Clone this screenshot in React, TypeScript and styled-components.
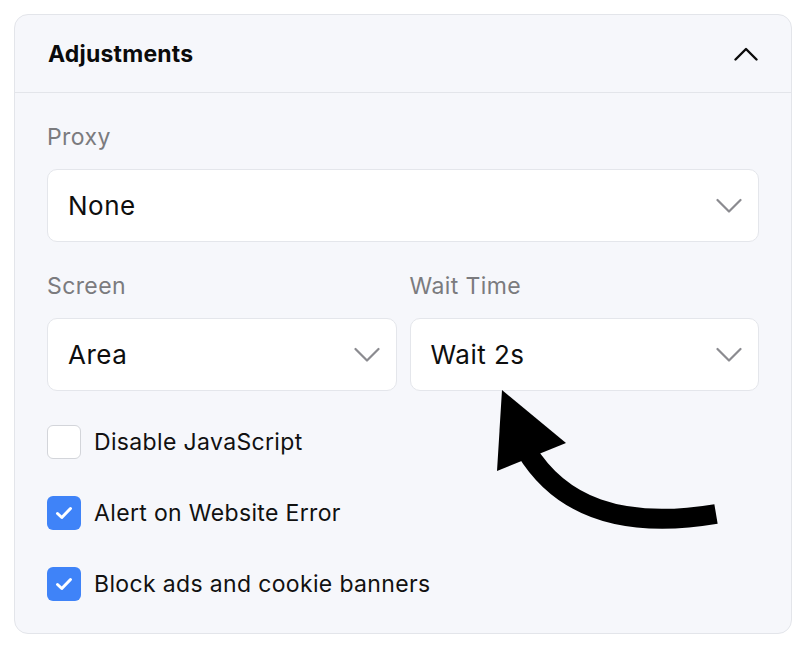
import React from "react";
import styled, { createGlobalStyle } from "styled-components";

const Global = createGlobalStyle`
  html, body { margin: 0; padding: 0; background: #ffffff; }
  body { font-family: Inter, "Noto Sans", sans-serif; color: #111111; }
  * { box-sizing: border-box; }
`;

const Page = styled.div`
  position: relative;
  width: 810px;
  height: 654px;
  padding: 14px 18px 20px 14px;
`;

const Card = styled.section`
  width: 778px;
  height: 620px;
  background: #f6f7fb;
  border: 1px solid #e3e5ea;
  border-radius: 14px;
  display: flex;
  flex-direction: column;
`;

const Header = styled.div`
  height: 78px;
  flex: none;
  display: flex;
  align-items: center;
  justify-content: space-between;
  padding: 0 33px;
  border-bottom: 1px solid #e3e5ea;
`;

const Title = styled.h2`
  margin: 0;
  font-size: 23px;
  font-weight: 700;
  letter-spacing: 0.2px;
  color: #0b0b0b;
`;

const Body = styled.div`
  padding: 30px 32px 0 32px;
  display: flex;
  flex-direction: column;
`;

const Field = styled.div`
  display: flex;
  flex-direction: column;
  gap: 18px;
  min-width: 0;
`;

const Row = styled.div`
  display: grid;
  grid-template-columns: 1fr 1fr;
  gap: 13px;
  margin-top: 30px;
`;

const Label = styled.div`
  font-size: 23px;
  line-height: 28px;
  letter-spacing: 0.4px;
  color: #7b7b7e;
`;

const Select = styled.div`
  height: 73px;
  background: #ffffff;
  border: 1px solid #e4e6eb;
  border-radius: 10px;
  display: flex;
  align-items: center;
  justify-content: space-between;
  padding: 0 16px 0 20px;
  font-size: 26px;
  letter-spacing: 0.5px;
  color: #0e0e0e;
`;

const Checks = styled.div`
  display: flex;
  flex-direction: column;
  gap: 37px;
  margin-top: 34px;
`;

const CheckRow = styled.label`
  display: flex;
  align-items: center;
  gap: 13px;
  font-size: 23px;
  letter-spacing: 0.35px;
  color: #111111;
  height: 34px;
`;

const Box = styled.span<{ $on: boolean }>`
  width: 34px;
  height: 34px;
  flex: none;
  border-radius: 6px;
  display: flex;
  align-items: center;
  justify-content: center;
  background: ${(p) => (p.$on ? "#3f83f8" : "#ffffff")};
  border: ${(p) => (p.$on ? "none" : "1.5px solid #d3d5da")};
`;

const Arrow = styled.svg`
  position: absolute;
  left: 0;
  top: 0;
  pointer-events: none;
`;

const ChevronDown = () => (
  <svg width="26" height="16" viewBox="0 0 26 16" fill="none">
    <path d="M1.5 2 L13 13.5 L24.5 2" stroke="#8b8b90" strokeWidth="2.2" strokeLinecap="round" strokeLinejoin="round" />
  </svg>
);

const ChevronUp = () => (
  <svg width="24" height="14" viewBox="0 0 24 14" fill="none">
    <path d="M1.5 12.5 L12 2 L22.5 12.5" stroke="#0b0b0b" strokeWidth="2.4" strokeLinecap="round" strokeLinejoin="round" />
  </svg>
);

const Check = () => (
  <svg width="18" height="14" viewBox="0 0 18 14" fill="none">
    <path d="M2.5 7.5 L6.8 11.5 L15.5 2.5" stroke="#ffffff" strokeWidth="3" strokeLinecap="round" strokeLinejoin="round" />
  </svg>
);

const options = [
  { label: "Disable JavaScript", on: false },
  { label: "Alert on Website Error", on: true },
  { label: "Block ads and cookie banners", on: true },
];

export default function App() {
  return (
    <Page>
      <Global />
      <Card>
        <Header>
          <Title>Adjustments</Title>
          <ChevronUp />
        </Header>
        <Body>
          <Field>
            <Label>Proxy</Label>
            <Select>
              None
              <ChevronDown />
            </Select>
          </Field>
          <Row>
            <Field>
              <Label>Screen</Label>
              <Select>
                Area
                <ChevronDown />
              </Select>
            </Field>
            <Field>
              <Label>Wait Time</Label>
              <Select>
                Wait 2s
                <ChevronDown />
              </Select>
            </Field>
          </Row>
          <Checks>
            {options.map((o) => (
              <CheckRow key={o.label}>
                <Box $on={o.on}>{o.on && <Check />}</Box>
                {o.label}
              </CheckRow>
            ))}
          </Checks>
        </Body>
      </Card>
      <Arrow width="810" height="654" viewBox="0 0 810 654">
        <path d="M526 450 C560 506, 620 530, 716 514" stroke="#000" strokeWidth="20" fill="none" />
        <polygon points="502,390 566,443 497,471" fill="#000" />
      </Arrow>
    </Page>
  );
}
